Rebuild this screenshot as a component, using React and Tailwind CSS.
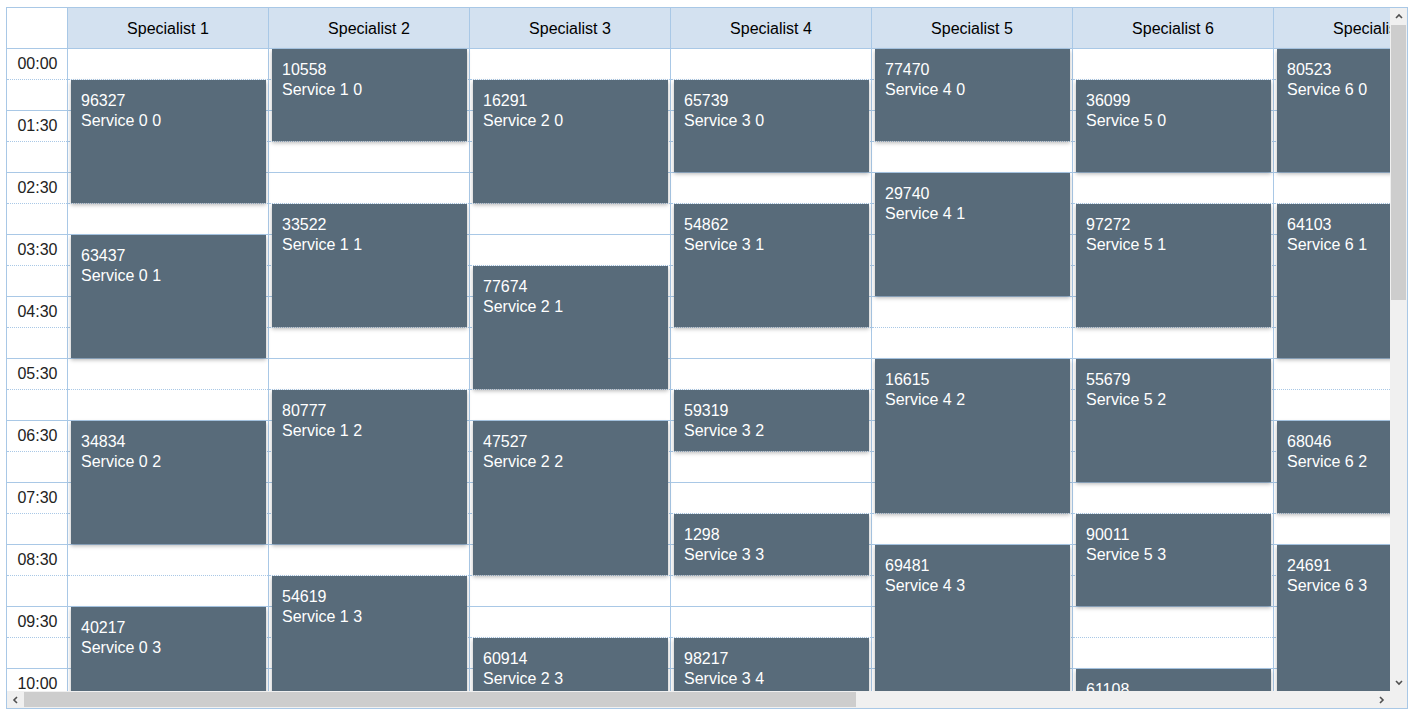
import React from 'react';

// appointments per specialist: [startSlot, slotCount, id, service]
const columns = [
  [[1, 4, '96327', 'Service 0 0'], [6, 4, '63437', 'Service 0 1'], [12, 4, '34834', 'Service 0 2'], [18, 4, '40217', 'Service 0 3']],
  [[0, 3, '10558', 'Service 1 0'], [5, 4, '33522', 'Service 1 1'], [11, 5, '80777', 'Service 1 2'], [17, 5, '54619', 'Service 1 3']],
  [[1, 4, '16291', 'Service 2 0'], [7, 4, '77674', 'Service 2 1'], [12, 5, '47527', 'Service 2 2'], [19, 4, '60914', 'Service 2 3']],
  [[1, 3, '65739', 'Service 3 0'], [5, 4, '54862', 'Service 3 1'], [11, 2, '59319', 'Service 3 2'], [15, 2, '1298', 'Service 3 3'], [19, 3, '98217', 'Service 3 4']],
  [[0, 3, '77470', 'Service 4 0'], [4, 4, '29740', 'Service 4 1'], [10, 5, '16615', 'Service 4 2'], [16, 6, '69481', 'Service 4 3']],
  [[1, 3, '36099', 'Service 5 0'], [5, 4, '97272', 'Service 5 1'], [10, 4, '55679', 'Service 5 2'], [15, 3, '90011', 'Service 5 3'], [20, 3, '61108', 'Service 5 4']],
  [[0, 4, '80523', 'Service 6 0'], [5, 5, '64103', 'Service 6 1'], [12, 3, '68046', 'Service 6 2'], [16, 6, '24691', 'Service 6 3']],
];

const hours = ['00:00', '01:30', '02:30', '03:30', '04:30', '05:30', '06:30', '07:30', '08:30', '09:30', '10:00', '11:00'];

const SLOT = 31;

const Chevron = ({ dir }) => {
  const pts = {
    up: '1,5 4,2 7,5',
    down: '1,2 4,5 7,2',
    left: '5,1 2,4 5,7',
    right: '2,1 5,4 2,7',
  };
  return (
    <svg width="8" height="8" viewBox="0 0 8 8">
      <polyline points={pts[dir]} fill="none" stroke="#505050" strokeWidth="1.6" />
    </svg>
  );
};

const GridSlots = () => (
  <>
    {hours.map((h) => (
      <div key={h}>
        <div className="h-[31px] border-b border-dotted border-[#a9c8e6]" />
        <div className="h-[31px] border-b border-[#a9c8e6]" />
      </div>
    ))}
  </>
);

const SpecialistColumn = ({ index, items }) => (
  <div className="w-[201px] shrink-0 border-r border-[#a9c8e6]">
    <div className="h-[41px] pt-[2px] border-b border-[#a9c8e6] bg-[#d3e1f0] flex items-center justify-center whitespace-nowrap text-black">
      Specialist {index + 1}
    </div>
    <div className="relative">
      <GridSlots />
      {items.map(([start, span, id, service]) => (
        <div
          key={id}
          className="absolute left-[3px] w-[195px] bg-[#586b7a] text-white pl-[10px] pt-[11px] leading-[20px] shadow-[0_2px_4px_rgba(0,0,0,0.28)]"
          style={{ top: start * SLOT, height: span * SLOT - 1 }}
        >
          <div>{id}</div>
          <div>{service}</div>
        </div>
      ))}
    </div>
  </div>
);

export default function App() {
  return (
    <div className="pt-[7px] pl-[6px] bg-white min-h-screen" style={{ fontFamily: '"Liberation Sans", Arial, sans-serif' }}>
      <div className="w-[1402px] h-[702px] border border-[#a9c8e6] flex flex-col text-[16px]">
        <div className="flex h-[683px]">
          <div className="w-[1383px] h-[683px] overflow-hidden flex">
            <div className="w-[61px] shrink-0 border-r border-[#a9c8e6]">
              <div className="h-[41px] border-b border-[#a9c8e6] bg-white" />
              {hours.map((h) => (
                <div key={h}>
                  <div className="h-[31px] border-b border-dotted border-[#a9c8e6] flex items-center justify-center pl-[1px] text-[#222]">
                    {h}
                  </div>
                  <div className="h-[31px] border-b border-[#a9c8e6]" />
                </div>
              ))}
            </div>
            {columns.map((items, i) => (
              <SpecialistColumn key={i} index={i} items={items} />
            ))}
          </div>
          <div className="w-[17px] bg-[#f0f0f0] flex flex-col">
            <div className="h-[17px] flex items-center justify-center">
              <Chevron dir="up" />
            </div>
            <div className="flex-1 flex flex-col">
              <div className="mx-[1px] h-[275px] bg-[#cdcdcd]" />
            </div>
            <div className="h-[17px] flex items-center justify-center">
              <Chevron dir="down" />
            </div>
          </div>
        </div>
        <div className="h-[17px] flex bg-[#f0f0f0]">
          <div className="w-[17px] flex items-center justify-center">
            <Chevron dir="left" />
          </div>
          <div className="w-[1349px] flex items-center">
            <div className="w-[832px] h-[15px] bg-[#cdcdcd]" />
          </div>
          <div className="w-[17px] flex items-center justify-center">
            <Chevron dir="right" />
          </div>
          <div className="w-[17px] bg-[#f0f0f0]" />
        </div>
      </div>
    </div>
  );
}
